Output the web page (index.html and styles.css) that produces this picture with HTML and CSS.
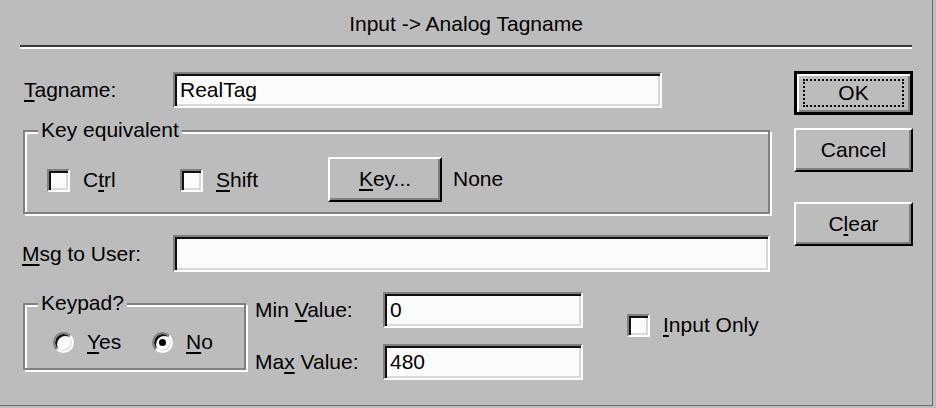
FILE: index.html
```
<!DOCTYPE html>
<html>
<head>
    <title>Input -> Analog Tagname</title>
    <link rel="stylesheet" href="styles.css">
</head>
<body>
    <div class="dialog">
        <div class="title">Input -&gt; Analog Tagname</div>
        <div class="separator"></div>

        <div class="content">
            <div class="main">
                <div class="field-row row-tag">
                    <label class="field-label label-tag"><u>T</u>agname:</label>
                    <input type="text" class="textbox tag-input" value="RealTag">
                </div>

                <div class="group key-group">
                    <span class="group-title">Key equivalent</span>
                    <div class="check-item item-ctrl"><span class="checkbox"></span><span>C<u>t</u>rl</span></div>
                    <div class="check-item item-shift"><span class="checkbox"></span><span><u>S</u>hift</span></div>
                    <button type="button" class="win-btn key-btn"><u>K</u>ey...</button>
                    <span class="key-value">None</span>
                </div>

                <div class="field-row row-msg">
                    <label class="field-label"><u>M</u>sg to User:</label>
                    <input type="text" class="textbox msg-input" value="">
                </div>

                <div class="bottom-row">
                    <div class="group keypad-group">
                        <span class="group-title">Keypad?</span>
                        <div class="radio-item item-yes"><span class="radio"></span><span><u>Y</u>es</span></div>
                        <div class="radio-item"><span class="radio checked"></span><span><u>N</u>o</span></div>
                    </div>

                    <div class="range-fields">
                        <div class="range-row">
                            <label class="range-label">Min <u>V</u>alue:</label>
                            <input type="text" class="textbox range-input" value="0">
                        </div>
                        <div class="range-row">
                            <label class="range-label">Ma<u>x</u> Value:</label>
                            <input type="text" class="textbox range-input" value="480">
                        </div>
                    </div>

                    <div class="check-item input-only"><span class="checkbox"></span><span><u>I</u>nput Only</span></div>
                </div>
            </div>

            <div class="buttons">
                <button type="button" class="win-btn default-btn">OK</button>
                <button type="button" class="win-btn cancel-btn">Cancel</button>
                <button type="button" class="win-btn clear-btn">C<u>l</u>ear</button>
            </div>
        </div>
    </div>
</body>
</html>
```

FILE: styles.css
```
body {
    margin: 0;
    background-color: #bdbcbc;
    font-family: 'Liberation Sans', Arial, sans-serif;
    font-size: 21px;
    color: #000;
}

u {
    text-decoration-thickness: 2px;
    text-underline-offset: 3px;
}

.dialog {
    width: 933px;
    height: 406px;
    box-sizing: border-box;
    border-right: 1px solid #6c6c6c;
    border-bottom: 1px solid #6c6c6c;
}

.title {
    height: 45px;
    box-sizing: border-box;
    padding-top: 12px;
    line-height: 24px;
    text-align: center;
}

.separator {
    margin: 0 20px 0 20px;
    border-top: 2px solid #3a3a3a;
    border-bottom: 2px solid #fff;
}

.content {
    display: flex;
    padding-left: 22px;
}

.main {
    width: 750px;
}

/* sunken edit boxes */
.textbox {
    box-sizing: border-box;
    height: 36px;
    margin: 0;
    padding: 0 0 0 5px;
    font-family: inherit;
    font-size: 21px;
    color: #000;
    background: #fbfbfb;
    border: 2px solid;
    border-color: #808080 #fff #fff #808080;
    box-shadow: inset 2px 2px 0 #111, inset -2px -2px 0 #d8d8d8;
    outline: none;
}

.field-row {
    display: flex;
    align-items: center;
}

.field-label {
    width: 151px;
}

.label-tag {
    padding-left: 2px;
    width: 149px;
}

.row-tag {
    margin-top: 23px;
}

.tag-input {
    width: 489px;
}

.row-msg {
    margin-top: 21px;
}

.msg-input {
    width: 597px;
    height: 37px;
}

/* etched group boxes */
.group {
    position: relative;
    display: flex;
    align-items: center;
    box-sizing: border-box;
    margin-left: 1px;
    border: 2px solid #808080;
    box-shadow: inset 2px 2px 0 #fff, 2px 2px 0 #fff;
}

.group-title {
    position: absolute;
    top: -14px;
    left: 13px;
    padding: 0 3px;
    line-height: 24px;
    background-color: #bdbcbc;
}

.key-group {
    margin-top: 22px;
    width: 747px;
    height: 84px;
    padding: 16px 0 0 22px;
}

.check-item,
.radio-item {
    display: flex;
    align-items: center;
    gap: 13px;
}

.checkbox {
    box-sizing: border-box;
    width: 23px;
    height: 23px;
    background: #fbfbfb;
    border: 2px solid;
    border-color: #808080 #fff #fff #808080;
    box-shadow: inset 2px 2px 0 #111, inset -2px -2px 0 #d8d8d8;
}

.item-ctrl {
    width: 133px;
}

.item-shift {
    width: 148px;
}

/* raised push buttons */
.win-btn {
    box-sizing: border-box;
    margin: 0;
    padding: 0;
    font-family: inherit;
    font-size: 21px;
    color: #000;
    background-color: #bdbcbc;
    border: 2px solid;
    border-color: #fff #000 #000 #fff;
    box-shadow: inset -2px -2px 0 #808080;
}

.key-btn {
    width: 114px;
    height: 45px;
    margin-top: -2px;
}

.key-value {
    margin-left: 11px;
    margin-top: -2px;
}

.bottom-row {
    display: flex;
    align-items: flex-start;
    margin-top: 20px;
}

.keypad-group {
    margin-top: 11px;
    width: 223px;
    height: 67px;
    padding: 11px 0 0 28px;
}

.radio {
    position: relative;
    box-sizing: border-box;
    width: 21px;
    height: 21px;
    border-radius: 50%;
    background: #fbfbfb;
    border: 2px solid;
    border-color: #808080 #fff #fff #808080;
    box-shadow: inset 2px 2px 0 #111, inset -1px -1px 0 #d8d8d8;
}

.radio.checked::after {
    content: "";
    position: absolute;
    left: 5px;
    top: 5px;
    width: 7px;
    height: 7px;
    border-radius: 50%;
    background: #000;
}

.item-yes {
    width: 99px;
}

.range-fields {
    display: flex;
    flex-direction: column;
    gap: 16px;
    margin-left: 9px;
}

.range-row {
    display: flex;
    align-items: center;
}

.range-label {
    width: 128px;
}

.range-input {
    width: 200px;
}

.input-only {
    margin-left: 44px;
    margin-top: 21px;
}

.buttons {
    display: flex;
    flex-direction: column;
    margin-left: 22px;
    margin-top: 22px;
}

.buttons .win-btn {
    width: 119px;
    height: 44px;
}

.default-btn {
    position: relative;
    border: 3px solid #000;
    box-shadow: inset 2px 2px 0 #fff, inset -2px -2px 0 #808080;
}

.default-btn::after {
    content: "";
    position: absolute;
    top: 5px;
    left: 6px;
    right: 6px;
    bottom: 5px;
    border: 2px dotted #000;
}

.cancel-btn {
    margin-top: 13px;
}

.clear-btn {
    margin-top: 30px;
}
```
